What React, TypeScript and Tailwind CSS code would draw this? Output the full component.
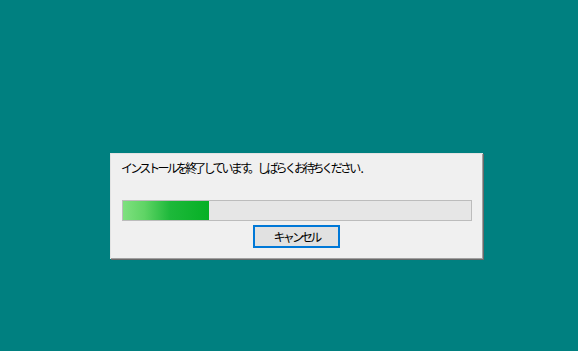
import React from "react";

export default function App() {
  return (
    <div className="w-[578px] h-[351px] bg-[#008080] pt-[153px] pl-[110px] overflow-hidden">
      <div className="w-[373px] h-[106px] bg-[#f0f0f0] border-l border-t border-[#e3e3e3] shadow-[inset_-1px_-1px_0_#a0a0a0,1px_1px_0_#696969] flex flex-col">
        <div
          className="pl-[10px] pt-[5px] h-[26px] text-[12px] leading-[17px] tracking-[-2.8px] text-black whitespace-nowrap"
          style={{ fontFamily: '"Noto Sans CJK JP", "Noto Sans", sans-serif' }}
        >
          インストールを終了しています。しばらくお待ちください<span className="tracking-normal pl-[2px]">.</span>
        </div>
        <div className="pl-[11px] pt-[20px]">
          <div className="w-[350px] h-[21px] border border-[#bcbcbc] bg-[#e6e6e6] flex">
            <div className="w-[86px] h-full bg-[linear-gradient(to_right,#7fe07f_0%,#5fd465_25%,#1db83a_55%,#06b025_100%)]" />
          </div>
        </div>
        <div className="flex justify-center pt-[4px] pr-[1px]">
          <div
            className="w-[87px] h-[23px] border-2 border-[#0078d7] bg-[#e1e1e1] flex items-center justify-center text-[12px] tracking-[-2.8px] text-black"
            style={{ fontFamily: '"Noto Sans CJK JP", "Noto Sans", sans-serif' }}
          >
            キャンセル
          </div>
        </div>
      </div>
    </div>
  );
}
